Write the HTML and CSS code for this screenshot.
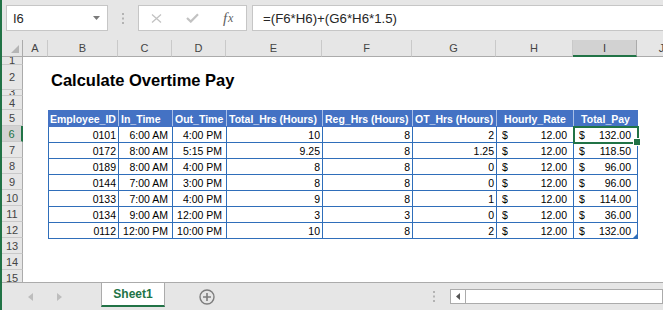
FILE: index.html
```html
<!DOCTYPE html>
<html>
<head>
<meta charset="utf-8">
<title>Calculate Overtime Pay</title>
<link rel="stylesheet" href="styles.css">
</head>
<body>
<div class="app">
  <div class="toolbar">
    <div class="namebox">
      <span>I6</span>
      <svg width="7" height="4" viewBox="0 0 7 4"><path d="M0 0H7L3.5 4Z" fill="#7a7a7a"/></svg>
    </div>
    <div class="grip">
      <svg width="2" height="11" viewBox="0 0 2 11"><rect x="0" y="0" width="2" height="2" fill="#b3b3b3"/><rect x="0" y="4.5" width="2" height="2" fill="#b3b3b3"/><rect x="0" y="9" width="2" height="2" fill="#b3b3b3"/></svg>
    </div>
    <div class="fxbox">
      <span class="btn"><svg width="11" height="9" viewBox="0 0 11 9"><path d="M1 0.5L10 8.5M10 0.5L1 8.5" stroke="#c2c2c2" stroke-width="1.3" fill="none"/></svg></span>
      <span class="btn"><svg width="13" height="10" viewBox="0 0 13 10"><path d="M1 5L4.8 8.6L12 1.2" stroke="#c2c2c2" stroke-width="2.2" fill="none"/></svg></span>
      <span class="btn fx"><span class="fx-f">f</span><span class="fx-x">x</span></span>
    </div>
    <div class="formula">=(F6*H6)+(G6*H6*1.5)</div>
  </div>

  <div class="colheads">
    <div class="ch corner"><svg width="8" height="8" viewBox="0 0 8 8"><path d="M8 0V8H0Z" fill="#b5b5b5"/></svg></div>
    <div class="ch w-a">A</div>
    <div class="ch w-b">B</div>
    <div class="ch w-c">C</div>
    <div class="ch w-d">D</div>
    <div class="ch w-e">E</div>
    <div class="ch w-f">F</div>
    <div class="ch w-g">G</div>
    <div class="ch w-h">H</div>
    <div class="ch w-i on">I</div>
    <div class="ch w-j">J</div>
  </div>

  <div class="sheet">
    <div class="rowheads">
      <div class="rh h8">1</div>
      <div class="rh h25">2</div>
      <div class="rh h6">3</div>
      <div class="rh h14">4</div>
      <div class="rh">5</div>
      <div class="rh on">6</div>
      <div class="rh">7</div>
      <div class="rh">8</div>
      <div class="rh">9</div>
      <div class="rh">10</div>
      <div class="rh">11</div>
      <div class="rh">12</div>
      <div class="rh">13</div>
      <div class="rh">14</div>
      <div class="rh">15</div>
    </div>
    <div class="cells">
      <div class="gap-r1"></div>
      <div class="title">Calculate Overtime Pay</div>
      <div class="gap-r34"></div>
      <table class="tbl">
        <colgroup>
          <col class="cb"><col class="cc"><col class="cd"><col class="ce"><col class="cf"><col class="cg"><col class="chr"><col class="ci">
        </colgroup>
        <thead>
          <tr>
            <th class="first">Employee_ID</th>
            <th>In_Time</th>
            <th>Out_Time</th>
            <th>Total_Hrs (Hours)</th>
            <th>Reg_Hrs (Hours)</th>
            <th>OT_Hrs (Hours)</th>
            <th class="mid">Hourly_Rate</th>
            <th class="mid last">Total_Pay</th>
          </tr>
        </thead>
        <tbody>
          <tr><td>0101</td><td class="t">6:00 AM</td><td class="t">4:00 PM</td><td>10</td><td>8</td><td>2</td><td class="acc"><span class="cur">$</span>12.00</td><td class="acc sel"><span class="cur">$</span>132.00</td></tr>
          <tr><td>0172</td><td class="t">8:00 AM</td><td class="t">5:15 PM</td><td>9.25</td><td>8</td><td>1.25</td><td class="acc"><span class="cur">$</span>12.00</td><td class="acc"><span class="cur">$</span>118.50</td></tr>
          <tr><td>0189</td><td class="t">8:00 AM</td><td class="t">4:00 PM</td><td>8</td><td>8</td><td>0</td><td class="acc"><span class="cur">$</span>12.00</td><td class="acc"><span class="cur">$</span>96.00</td></tr>
          <tr><td>0144</td><td class="t">7:00 AM</td><td class="t">3:00 PM</td><td>8</td><td>8</td><td>0</td><td class="acc"><span class="cur">$</span>12.00</td><td class="acc"><span class="cur">$</span>96.00</td></tr>
          <tr><td>0133</td><td class="t">7:00 AM</td><td class="t">4:00 PM</td><td>9</td><td>8</td><td>1</td><td class="acc"><span class="cur">$</span>12.00</td><td class="acc"><span class="cur">$</span>114.00</td></tr>
          <tr><td>0134</td><td class="t">9:00 AM</td><td class="t">12:00 PM</td><td>3</td><td>3</td><td>0</td><td class="acc"><span class="cur">$</span>12.00</td><td class="acc"><span class="cur">$</span>36.00</td></tr>
          <tr><td>0112</td><td class="t">12:00 PM</td><td class="t">10:00 PM</td><td>10</td><td>8</td><td>2</td><td class="acc"><span class="cur">$</span>12.00</td><td class="acc end"><span class="cur">$</span>132.00</td></tr>
        </tbody>
      </table>
    </div>
  </div>

  <div class="tabbar">
    <div class="navs">
      <span class="nav"><svg width="5" height="8" viewBox="0 0 5 8"><path d="M5 0V8L0 4Z" fill="#bdbdbd"/></svg></span>
      <span class="nav"><svg width="5" height="8" viewBox="0 0 5 8"><path d="M0 0V8L5 4Z" fill="#bdbdbd"/></svg></span>
    </div>
    <div class="tab">Sheet1</div>
    <div class="add"><svg width="16" height="16" viewBox="0 0 16 16"><circle cx="8" cy="8" r="7" stroke="#7d7d7d" stroke-width="1.4" fill="none"/><path d="M8 4V12M4 8H12" stroke="#7d7d7d" stroke-width="1.6"/></svg></div>
    <div class="spacer"></div>
    <div class="hgrip"><svg width="2" height="11" viewBox="0 0 2 11"><rect x="0" y="0" width="2" height="2" fill="#b3b3b3"/><rect x="0" y="4.5" width="2" height="2" fill="#b3b3b3"/><rect x="0" y="9" width="2" height="2" fill="#b3b3b3"/></svg></div>
    <div class="scroll">
      <span class="sbtn"><svg width="4" height="7" viewBox="0 0 4 7"><path d="M4 0V7L0 3.5Z" fill="#555"/></svg></span>
    </div>
  </div>
</div>
</body>
</html>
```

FILE: styles.css
```css
* { box-sizing: border-box; margin: 0; padding: 0; }
html, body { width: 663px; height: 310px; overflow: hidden; background: #fff; }
body { font-family: "Liberation Sans", Arial, sans-serif; color: #000; }

.app {
  width: 663px; height: 310px;
  border-left: 2px solid #217346;
  display: flex; flex-direction: column;
  overflow: hidden; background: #fff;
}

/* formula bar */
.toolbar {
  flex: none; height: 40px; background: #e6e6e6;
  display: flex; align-items: flex-start;
  padding: 5px 0 0 4px;
}
.namebox {
  flex: none; width: 102px; height: 26px; background: #fff;
  border: 1px solid #c6c6c6;
  display: flex; align-items: center; justify-content: space-between;
  padding: 0 7px 0 6px; font-size: 13px; color: #262626;
}
.grip { flex: none; width: 30px; height: 26px; display: flex; align-items: center; justify-content: center; }
.fxbox {
  flex: none; width: 109px; height: 26px; background: #fff;
  border: 1px solid #c6c6c6; display: flex; align-items: center;
}
.btn { width: 36px; height: 24px; display: flex; align-items: center; justify-content: center; }
.fx { font-family: "Liberation Serif", "DejaVu Serif", serif; font-style: italic; color: #5f5f5f; }
.fx-f { font-size: 15px; }
.fx-x { font-size: 12px; margin-left: 1px; }
.formula {
  flex: 1 0 auto; margin-left: 5px; height: 26px; background: #fff;
  border: 1px solid #c6c6c6; border-right: none;
  display: flex; align-items: center; padding-left: 10px;
  font-size: 13.25px; color: #262626; white-space: nowrap;
}

/* column headers */
.colheads { flex: none; height: 17px; display: flex; background: #e6e6e6; }
.ch {
  flex: none; height: 17px; display: flex; align-items: center; justify-content: center;
  font-size: 11px; color: #444;
  border-right: 1px solid #c9c9c9; border-bottom: 1px solid #ababab;
}
.corner { width: 21px; justify-content: flex-end; align-items: flex-end; padding: 0 3px 3px 0; border-right-color: #ababab; }
.w-a { width: 25px; }
.w-b { width: 70px; }
.w-c { width: 54px; }
.w-d { width: 54px; }
.w-e { width: 96px; }
.w-f { width: 90px; }
.w-g { width: 84px; }
.w-h { width: 77px; }
.w-i { width: 64px; }
.w-j { width: 50px; }
.ch.on { background: #d2d2d2; color: #3a3a3a; border-bottom: 2px solid #217346; border-right-color: #ababab; }

/* sheet */
.sheet { flex: none; height: 225px; display: flex; overflow: hidden; }
.rowheads { flex: none; width: 21px; background: #e6e6e6; }
.rh {
  height: 16px; display: flex; align-items: center; justify-content: center;
  font-size: 11px; line-height: 12px; color: #444; overflow: hidden;
  border-bottom: 1px solid #c9c9c9; border-right: 1px solid #ababab;
}
.rh.h8 { height: 8px; line-height: 7px; }
.rh.h25 { height: 25px; }
.rh.h6 { height: 6px; line-height: 5px; }
.rh.h14 { height: 14px; }
.rh.on { background: #d2d2d2; color: #217346; border-right: 2px solid #217346; }

.cells { flex: 1; padding-left: 25px; }
.gap-r1 { height: 8px; }
.title {
  height: 25px; display: flex; align-items: flex-end;
  padding-left: 3px; font-size: 16.5px; font-weight: bold; line-height: 20px;
}
.gap-r34 { height: 20px; }

.tbl { border-collapse: collapse; table-layout: fixed; width: 589px; font-size: 10.5px; }
.cb { width: 70px; }
.cc { width: 54px; }
.cd { width: 54px; }
.ce { width: 96px; }
.cf { width: 90px; }
.cg { width: 84px; }
.chr { width: 77px; }
.ci { width: 64px; }

.tbl th, .tbl td {
  height: 16px; padding: 0 2px; white-space: nowrap; overflow: hidden;
  line-height: 14px; vertical-align: bottom;
}
.tbl th {
  background: #4472c4; color: #fff; font-weight: bold; text-align: left;
  border: 1px solid #4472c4; border-left-color: #a9bfe6; border-right-color: #a9bfe6;
}
.tbl th.first { border-left-color: #4472c4; padding-left: 1px; padding-right: 1px; }
.tbl th.last { border-right-color: #4472c4; }
.tbl th.mid { text-align: center; }
.tbl td { border: 1px solid #2f6eba; text-align: right; }
.tbl td.t { padding-right: 4px; }
.tbl td.acc { padding-right: 6px; }
.cur { float: left; padding-left: 3px; }

.tbl td.sel { position: relative; overflow: visible; outline: 2px solid #217346; outline-offset: -1px; }
.tbl td.sel::after {
  content: ""; position: absolute; right: -4px; bottom: -4px;
  width: 6px; height: 6px; background: #217346; border: 1px solid #fff;
}
.tbl td.end { position: relative; overflow: visible; }
.tbl td.end::after {
  content: ""; position: absolute; right: 0; bottom: 0;
  width: 0; height: 0; border-left: 4px solid transparent; border-bottom: 4px solid #2f6eba;
}

/* sheet tabs */
.tabbar {
  flex: none; height: 28px; background: #e6e6e6; border-top: 1px solid #ababab;
  display: flex; align-items: flex-start;
}
.navs { flex: none; width: 99px; height: 27px; display: flex; padding-left: 14px; }
.nav { width: 29px; height: 27px; display: flex; align-items: center; justify-content: center; }
.tab {
  flex: none; width: 64px; height: 24px; background: #fff;
  border-left: 1px solid #ababab; border-right: 1px solid #ababab; border-bottom: 2px solid #217346;
  display: flex; align-items: center; justify-content: center;
  font-size: 12px; font-weight: bold; color: #217346;
}
.add { flex: none; width: 84px; height: 27px; display: flex; align-items: center; justify-content: center; }
.spacer { flex: 1; }
.hgrip { flex: none; width: 14px; height: 27px; margin-right: 9px; display: flex; align-items: center; justify-content: center; }
.scroll {
  flex: none; width: 213px; height: 15px; margin-top: 6px;
  background: #fff; border: 1px solid #ababab; display: flex;
}
.sbtn { width: 15px; height: 13px; border-right: 1px solid #ababab; display: flex; align-items: center; justify-content: center; }
```
